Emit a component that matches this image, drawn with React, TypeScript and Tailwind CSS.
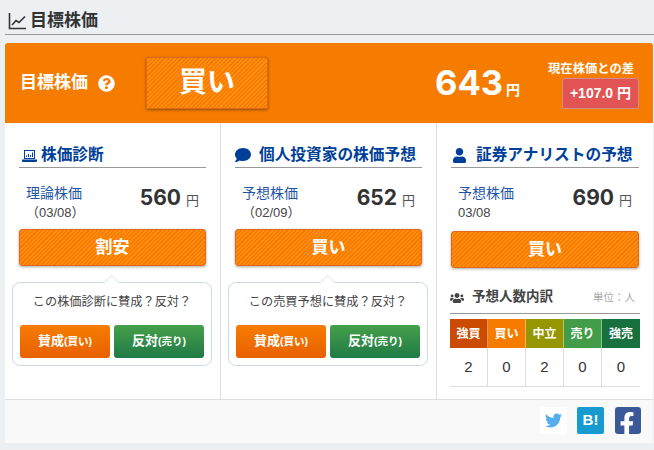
import { FaComment, FaUser, FaUsers, FaQuestionCircle, FaTwitter, FaFacebookF } from "react-icons/fa";

const stripe =
  "bg-[repeating-linear-gradient(135deg,#f67c00_0px,#f67c00_1.5px,#ff8c12_1.5px,#ff8c12_3px)]";

function Heading({ icon, text, gap }: { icon: React.ReactNode; text: string; gap: string }) {
  return (
    <div className={`flex items-center h-[25px] border-b border-[#999] font-bold text-[15.7px] text-[#003f98] ${gap}`}>
      {icon}
      <span className="whitespace-nowrap">{text}</span>
    </div>
  );
}

function Value({ label, date, value }: { label: string; date: string; value: string }) {
  return (
    <div className="flex items-start justify-between h-[61px] pt-[15px] pr-[7px] pl-[7px]">
      <div>
        <div className="text-[14px] leading-[20px] text-[#1f55a3]">{label}</div>
        <div className="text-[13px] leading-[16px] mt-[2px] text-[#444]">{date}</div>
      </div>
      <div className="flex items-baseline gap-[5px] mt-[1px] text-[#333]">
        <span className="font-['Inter'] text-[21px] leading-[28px] font-bold">{value}</span>
        <span className="text-[13px] text-[#555]">円</span>
      </div>
    </div>
  );
}

function Verdict({ text }: { text: string }) {
  return (
    <div className={`flex items-center justify-center h-[37px] rounded-[3px] border border-[#e0681c] shadow-[0_1px_3px_rgba(0,0,0,0.35)] text-white font-bold text-[17px] ${stripe}`}>
      {text}
    </div>
  );
}

function Vote({ question }: { question: string }) {
  return (
    <div className="relative ml-[-7px] mr-[-6px] mt-[16px] h-[84px] rounded-[8px] border border-[#cdd9e6] bg-white px-[7px] pt-[9px]">
      <div className="absolute left-1/2 top-[-6px] ml-[-6px] w-[11px] h-[11px] rotate-45 bg-white border-l border-t border-[#e4e9ee]" />
      <div className="relative text-center text-[12.2px] leading-[20px] text-[#444] whitespace-nowrap">{question}</div>
      <div className="flex gap-[4px] mt-[13px]">
        <div className="flex-1 h-[33px] rounded-[3px] bg-gradient-to-b from-[#f67c00] to-[#e86000] flex items-baseline justify-center pt-[7px] text-white font-bold text-[13px] leading-[18px]">
          賛成<span className="text-[10.5px]">(買い)</span>
        </div>
        <div className="flex-1 h-[33px] rounded-[3px] bg-gradient-to-b from-[#45a049] to-[#1f7a46] flex items-baseline justify-center pt-[7px] text-white font-bold text-[13px] leading-[18px]">
          反対<span className="text-[10.5px]">(売り)</span>
        </div>
      </div>
    </div>
  );
}

const headers = [
  { t: "強買", c: "bg-[#cb4b02]" },
  { t: "買い", c: "bg-[#f67c00]" },
  { t: "中立", c: "bg-[#969600]" },
  { t: "売り", c: "bg-[#429c48]" },
  { t: "強売", c: "bg-[#18703f]" },
];
const counts = [2, 0, 2, 0, 0];

export default function App() {
  return (
    <div className="w-[654px] h-[450px] overflow-hidden bg-[#ecf0f3] pl-[5px] font-['Liberation_Sans','Noto_Sans_CJK_JP',sans-serif]">
      <div className="flex items-center gap-[3px] h-[35px] border-b border-[#999] pl-[3px] pt-[8px] text-[17px] font-bold text-[#333]">
        <svg width="19" height="19" viewBox="0 0 19 19" fill="none" stroke="#333" className="mt-[-1px]">
          <path d="M1.5 2v15.5H18" strokeWidth="1.6" />
          <path d="M4 14l4-4.5 3 2 6-6" strokeWidth="1.6" />
        </svg>
        <span>目標株価</span>
      </div>

      <div className="w-[648px] mt-[8px] rounded-t-[3px] h-[80px] bg-[#f67c00] flex items-center text-white">
        <div className="flex items-center gap-[10px] w-[141px] pl-[15px] font-bold text-[17px]">
          <span>目標株価</span>
          <FaQuestionCircle size={17} />
        </div>
        <div className={`flex items-center justify-center w-[122px] h-[52px] rounded-[2px] border border-[#e0681c] shadow-[0_1px_3px_rgba(0,0,0,0.4)] font-bold text-[28px] ${stripe}`}>
          買い
        </div>
        <div className="ml-auto flex items-baseline gap-[3px] mr-[28px]">
          <span className="font-['Inter'] text-[34.5px] leading-[44px] font-bold">643</span>
          <span className="text-[14px] font-bold">円</span>
        </div>
        <div className="flex flex-col items-end mr-[14px] mt-[3px]">
          <div className="text-[12.3px] font-bold leading-[16px] mb-[1px] mr-[5px] whitespace-nowrap">現在株価との差</div>
          <div className="flex items-center justify-center w-[77px] h-[31px] rounded-[3px] border border-[#d98a8a] bg-[#e25353] text-[14px] font-bold">
            +107.0 円
          </div>
        </div>
      </div>

      <div className="w-[648px] h-[277px] bg-white grid grid-cols-[216px_216px_1fr] border-b border-[#dfdfdf]">
        <div className="border-r border-[#dcdcdc] px-[14px] pt-[20px]">
          <Heading
            gap="gap-[4px] pl-[3px]"
            text="株価診断"
            icon={
              <svg width="15" height="13" viewBox="0 0 15 13" fill="#003f98">
                <path d="M2 1h11v9H2zM3 2v7h9V2z" fillRule="evenodd" />
                <path d="M4 8V6.5h1V8zM6 8V5h1v3zM8 8V6h1v2zM10 8V3.5h1V8z" />
                <path d="M0 10.5h15V12a1 1 0 0 1-1 1H1a1 1 0 0 1-1-1z" />
              </svg>
            }
          />
          <Value label="理論株価" date="（03/08）" value="560" />
          <Verdict text="割安" />
          <Vote question="この株価診断に賛成？反対？" />
        </div>

        <div className="border-r border-[#dcdcdc] px-[14px] pt-[20px]">
          <Heading gap="gap-[8px]" text="個人投資家の株価予想" icon={<FaComment size={16} color="#003f98" />} />
          <Value label="予想株価" date="（02/09）" value="652" />
          <Verdict text="買い" />
          <Vote question="この売買予想に賛成？反対？" />
        </div>

        <div className="px-[14px] pt-[20px]">
          <Heading gap="gap-[9px] pl-[1px]" text="証券アナリストの予想" icon={<FaUser size={15} color="#003f98" />} />
          <div className="h-[63px]">
            <Value label="予想株価" date="03/08" value="690" />
          </div>
          <Verdict text="買い" />
          <div className="flex items-center h-[46px] border-b border-[#999] mx-[-1px] pt-[16px] pb-[2px] text-[13.5px] font-bold text-[#444]">
            <FaUsers size={14} color="#444" className="mr-[8px]" />
            <span>予想人数内訳</span>
            <span className="ml-auto mr-[5px] text-[10.5px] font-normal text-[#aaa]">単位：人</span>
          </div>
          <div className="grid grid-cols-5 mx-[-1px] mt-[5px] border-b border-[#dcdcdc]">
            {headers.map((h, i) => (
              <div key={h.t} className={`flex items-center justify-center h-[29px] text-white font-bold text-[12px] ${h.c} ${i < 4 ? "border-r border-white/40" : ""}`}>
                {h.t}
              </div>
            ))}
            {counts.map((n, i) => (
              <div key={i} className={`flex items-center justify-center h-[38px] text-[15px] text-[#333] ${i < 4 ? "border-r border-[#dcdcdc]" : ""}`}>
                {n}
              </div>
            ))}
          </div>
        </div>
      </div>

      <div className="w-[648px] h-[43px] bg-[#f9f9f9] flex items-center justify-end pr-[12px] pb-[3px]">
        <div className="flex items-center justify-center w-[27px] h-[27px] bg-white rounded-[2px]">
          <FaTwitter size={17} color="#55acee" />
        </div>
        <div className="flex items-center justify-center ml-[10px] w-[27px] h-[27px] rounded-[2px] bg-[#169ad0] text-white font-bold text-[15px]">
          B!
        </div>
        <div className="flex items-end justify-end ml-[11px] w-[26px] h-[27px] rounded-[3px] bg-[#3b5998] overflow-hidden">
          <FaFacebookF size={24} color="#fff" className="mb-[-2px] mr-[2px]" />
        </div>
      </div>
    </div>
  );
}
